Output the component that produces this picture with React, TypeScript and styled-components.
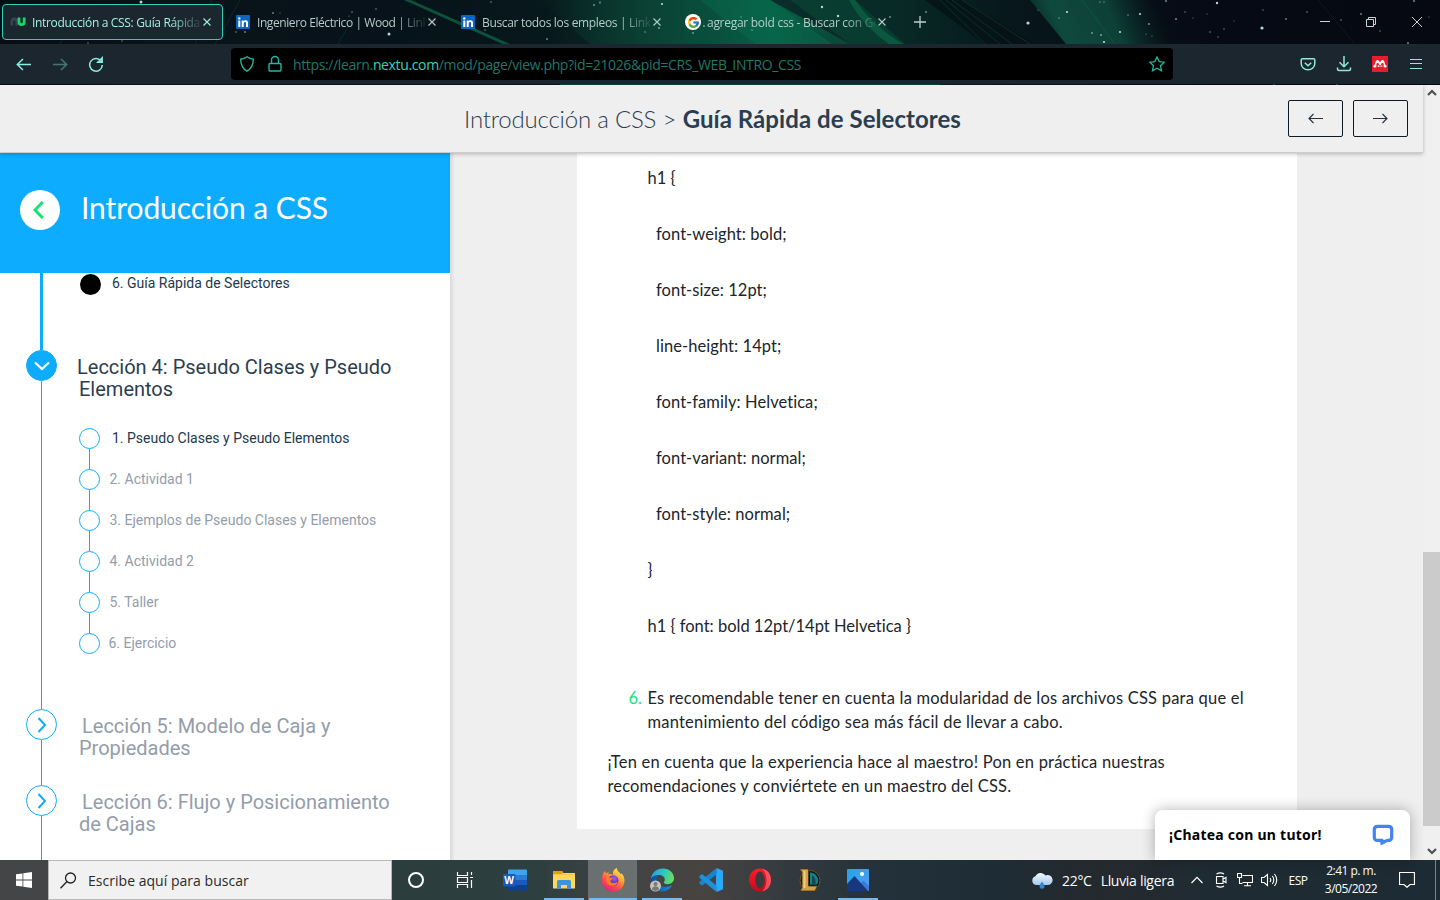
import React from 'react';
import styled, { createGlobalStyle, css } from 'styled-components';
import { FcGoogle } from 'react-icons/fc';

const ui = `"Open Sans", "Noto Sans", sans-serif`;
const blue = '#0eacff';

const Global = createGlobalStyle`
  * { box-sizing: border-box; }
  body { margin: 0; overflow: hidden; background: #efefef; }
  p, h1, h2, ol, ul { margin: 0; padding: 0; font-weight: 400; }
  svg { display: block; flex: none; }
  button { padding: 0; margin: 0; border: 0; background: none; font: inherit; color: inherit; }
`;

const Screen = styled.div`
  width: 1440px;
  height: 900px;
  display: flex;
  flex-direction: column;
  overflow: hidden;
  font-family: ${ui};
`;

/* ---------- browser chrome ---------- */

const Chrome = styled.header`
  position: relative;
  height: 85px;
  flex: none;
  background: #060a13;
`;

const Backdrop = styled.svg`
  position: absolute;
  inset: 0;
`;

const TabStrip = styled.div`
  position: relative;
  height: 44px;
  display: flex;
  align-items: center;
  padding-left: 2px;
`;

const Tab = styled.div<{ $active?: boolean }>`
  width: 221px;
  height: 36px;
  margin-right: 4px;
  padding-left: 7px;
  display: flex;
  align-items: center;
  border: 1px solid ${p => (p.$active ? '#35d0ba' : 'transparent')};
  border-radius: 4px;
  background: ${p => (p.$active ? '#1c262e' : 'transparent')};
  color: ${p => (p.$active ? '#a0f0e4' : '#b4cdc8')};
`;

const Favicon = styled.span`
  width: 16px;
  height: 16px;
  margin-right: 6px;
  display: flex;
  align-items: center;
  justify-content: center;
`;

const GoogleDisc = styled.span`
  width: 16px;
  height: 16px;
  flex: none;
  border-radius: 50%;
  background: #fff;
  display: flex;
  align-items: center;
  justify-content: center;
`;

const TabLabel = styled.span<{ $track: number }>`
  width: 168px;
  padding-top: 2px;
  overflow: hidden;
  white-space: nowrap;
  font-size: 12px;
  line-height: 18px;
  letter-spacing: ${p => p.$track}px;
  mask-image: linear-gradient(to right, #000 138px, transparent 172px);
`;

const TabClose = styled.span`
  width: 14px;
  display: flex;
  justify-content: center;
`;

const WindowControls = styled.div`
  margin-left: auto;
  display: flex;
  color: #c4d6d4;
`;

const WindowButton = styled.button`
  width: 46px;
  height: 44px;
  display: flex;
  align-items: center;
  justify-content: center;
`;

const NewTab = styled.button`
  width: 36px;
  display: flex;
  justify-content: center;
  color: #b9d2cd;
`;

const Toolbar = styled.div`
  position: relative;
  height: 40px;
  display: flex;
  align-items: center;
  padding: 0 6px;
  background: #1c262e;
  color: #8eeadc;
`;

const ToolButton = styled.button<{ $dim?: boolean }>`
  width: 36px;
  height: 32px;
  display: flex;
  align-items: center;
  justify-content: center;
  opacity: ${p => (p.$dim ? 0.4 : 1)};
`;

const UrlBar = styled.div`
  width: 942px;
  height: 32px;
  margin: 0 117px;
  padding: 0 8px;
  display: flex;
  align-items: center;
  border-radius: 4px;
  background: #000;
  color: #26b59f;
`;

const LockSlot = styled.span`
  margin-left: 12px;
`;

const UrlText = styled.span`
  margin: 1px auto 0 10px;
  font-size: 14px;
  letter-spacing: -0.36px;
  white-space: nowrap;
  color: #20776b;
  b { font-weight: 400; color: #35d3bb; }
`;

/* ---------- page ---------- */

const Viewport = styled.div`
  position: relative;
  flex: 1;
  min-height: 0;
  display: flex;
`;

const Page = styled.div`
  width: 1423px;
  display: flex;
  flex-direction: column;
  background: #efefef;
`;

const PageHeader = styled.div`
  position: relative;
  z-index: 1;
  height: 68px;
  flex: none;
  display: grid;
  grid-template-columns: 1fr auto 1fr;
  align-items: center;
  padding: 0 15px;
  background: #efefef;
  box-shadow: inset 0 -1px 0 #cdcdcd, 0 1px 4px rgba(0, 0, 0, 0.25);
`;

const Crumb = styled.h1`
  grid-column: 2;
  font: 300 24px/36px Lato, sans-serif;
  color: #2b3e50;
  white-space: nowrap;
  margin-top: -1px;
  padding-left: 2px;
  letter-spacing: -0.2px;
  b { font-weight: 700; letter-spacing: 0.06px; }
`;

const PagerGroup = styled.div`
  justify-self: end;
  display: flex;
  gap: 10px;
`;

const PagerButton = styled.button`
  width: 55px;
  height: 37px;
  display: flex;
  align-items: center;
  justify-content: center;
  margin-top: -1px;
  border: 1px solid #0f1a24;
  border-radius: 2px;
`;

const Columns = styled.div`
  flex: 1;
  min-height: 0;
  display: flex;
`;

const Sidebar = styled.aside`
  width: 450px;
  flex: none;
  display: flex;
  flex-direction: column;
  overflow: hidden;
  background: #fff;
`;

const SidebarShade = styled.div`
  width: 5px;
  background: linear-gradient(to right, #d8dadd, #efefef);
`;

const CourseHeader = styled.div`
  height: 120px;
  flex: none;
  display: flex;
  align-items: center;
  padding: 0 20px 6px;
  background: ${blue};
`;

const BackCircle = styled.button`
  width: 40px;
  height: 40px;
  flex: none;
  border-radius: 50%;
  background: #fff;
  display: flex;
  align-items: center;
  justify-content: center;
  padding-right: 2px;
`;

const CourseTitle = styled.h2`
  margin: -6px 0 0 19px;
  font: 400 30px/40px Lato, sans-serif;
  letter-spacing: -0.08px;
  padding-left: 2px;
  color: #fff;
`;

const Lesson = styled.section<{ $h: number }>`
  height: ${p => p.$h}px;
  flex: none;
  display: flex;
  padding-left: 26px;
  font-family: Roboto, sans-serif;
`;

const Rail = styled.div`
  width: 31px;
  flex: none;
  display: flex;
  flex-direction: column;
  align-items: center;
`;

const RailLine = styled.div<{ $w: number }>`
  width: ${p => p.$w}px;
  flex: 1;
  background: ${blue};
`;

const RailNode = styled.div<{ $filled?: boolean }>`
  width: 31px;
  height: 31px;
  display: flex;
  align-items: center;
  justify-content: center;
  border: 1px solid ${blue};
  border-radius: 50%;
  background: ${p => (p.$filled ? blue : '#fff')};
  color: ${p => (p.$filled ? '#fff' : blue)};
`;

const LessonBody = styled.div`
  padding-left: 22px;
`;

const LessonTitle = styled.h2<{ $open?: boolean }>`
  margin-top: 6px;
  font-size: 20px;
  line-height: 22px;
  white-space: pre;
  text-indent: ${p => (p.$open ? -2 : 3)}px;
  color: ${p => (p.$open ? '#2b3e50' : '#939dab')};
`;

const Topics = styled.ul`
  margin-top: 28px;
  list-style: none;
`;

const Topic = styled.li<{ $current?: boolean; $done?: boolean }>`
  display: flex;
  padding: ${p => (p.$done ? '1px 0 0 1px' : '0')};
  font-size: 14px;
  line-height: 20px;
  white-space: nowrap;
  color: ${p => (p.$current ? '#24384c' : '#939dab')};
`;

const TopicRail = styled.div`
  width: 21px;
  display: flex;
  flex-direction: column;
  align-items: center;
`;

const TopicDot = styled.span<{ $done?: boolean }>`
  width: 21px;
  height: 21px;
  flex: none;
  border-radius: 50%;
  ${p => (p.$done ? css`background: #000;` : css`border: 1px solid ${blue};`)}
`;

const TopicLink = styled.span`
  width: 1px;
  height: 20px;
  background: ${blue};
`;

const TopicText = styled.span<{ $gap: number; $lift?: number }>`
  margin: -${p => p.$lift ?? 0}px 0 0 ${p => p.$gap}px;
`;

const Content = styled.main`
  flex: 1;
  padding-left: 122px;
  overflow: hidden;
`;

const Article = styled.article`
  width: 720px;
  height: 676px;
  padding: 12.5px 30px 0 30.5px;
  background: #fff;
  font: 400 16.5px/24px Lato, sans-serif;
  font-variant-ligatures: none;
  color: #212529;
`;

const CodeLine = styled.p<{ $indent?: boolean }>`
  margin: 0 0 32px ${p => (p.$indent ? 48.5 : 40)}px;
  letter-spacing: ${p => (p.$indent ? 0.06 : 0)}px;
`;

const Tip = styled.div`
  margin-top: 48px;
  display: grid;
  grid-template-columns: 40px 1fr;
`;

const TipNumber = styled.span`
  padding-left: 21px;
  color: #10e67c;
`;

const Closing = styled.div`
  margin-top: 16px;
`;

const TextLine = styled.p<{ $track: number }>`
  letter-spacing: ${p => p.$track}px;
  white-space: nowrap;
`;

const Scrollbar = styled.div`
  width: 17px;
  display: flex;
  flex-direction: column;
  align-items: center;
  background: #f0f0f0;
  padding: 4px 0 5px;
`;

const ScrollThumb = styled.div`
  width: 17px;
  height: 274px;
  margin: auto 0 22px;
  background: #cbcbcb;
`;

const ChatTab = styled.div`
  position: absolute;
  right: 30px;
  bottom: 0;
  z-index: 2;
  width: 255px;
  height: 50px;
  padding: 0 16px 0 14px;
  display: flex;
  align-items: center;
  justify-content: space-between;
  border-radius: 8px 8px 0 0;
  background: #fff;
  box-shadow: 0 0 14px rgba(0, 0, 0, 0.3);
  font: 700 14px/20px "Noto Sans", sans-serif;
  letter-spacing: 0.24px;
  color: #000;
`;

/* ---------- taskbar ---------- */

const Taskbar = styled.footer`
  height: 40px;
  flex: none;
  display: flex;
  background: linear-gradient(to right, #434547 0, #434547 48px, #2c3d3d 392px, #2e3f3f 540px, #434443 640px, #474341 710px, #323a3f 790px, #23313a 880px, #1e2c35 1000px, #25292c 1100px, #1f2b33 1200px, #1d2b34 100%);
  color: #fff;
`;

const TaskButton = styled.button<{ $w?: number; $line?: number; $active?: boolean }>`
  position: relative;
  width: ${p => p.$w ?? 49}px;
  height: 40px;
  display: flex;
  align-items: center;
  justify-content: center;
  background: ${p => (p.$active ? '#69706f' : 'transparent')};
  ${p =>
    p.$line &&
    css`
      &::after {
        content: '';
        position: absolute;
        bottom: 0;
        left: ${((p.$w ?? 49) - p.$line) / 2}px;
        width: ${p.$line}px;
        height: 2px;
        background: #76b9ed;
      }
    `}
`;

const SearchBox = styled.div`
  width: 344px;
  height: 40px;
  display: flex;
  align-items: center;
  padding-left: 11px;
  gap: 11px;
  border: 1px solid #b8b8b8;
  background: #f1f1f1;
  color: #2b2b2b;
  font-size: 14px;
  letter-spacing: 0.03px;
`;

const Tray = styled.div`
  margin-left: auto;
  display: flex;
  align-items: center;
`;

const Weather = styled.div`
  width: 154px;
  display: flex;
  align-items: center;
  gap: 9px;
  padding-top: 1px;
  font-size: 14px;
  letter-spacing: -0.3px;
  white-space: pre;
`;

const TrayCell = styled.div<{ $w: number }>`
  width: ${p => p.$w}px;
  display: flex;
  justify-content: center;
  font-size: 12px;
  letter-spacing: -0.5px;
`;

const Clock = styled.div`
  width: 74px;
  padding-right: 2px;
  text-align: center;
  font-size: 12px;
  line-height: 18px;
  letter-spacing: -0.5px;
`;

const DesktopEdge = styled.div`
  width: 5px;
  height: 40px;
  margin-left: 10px;
  border-left: 1px solid #7b858b;
`;

/* ---------- icons ---------- */

const Line: React.FC<{ w: number; h: number; d: string; sw?: number; color?: string }> = ({ w, h, d, sw = 1, color }) => (
  <svg width={w} height={h} viewBox={`0 0 ${w} ${h}`} fill="none" stroke={color ?? 'currentColor'} strokeWidth={sw}>
    <path d={d} />
  </svg>
);

const NuIcon = () => (
  <svg width="16" height="16" fill="none" strokeWidth="2.800">
    <path d="M1.800 11.500V7.500a2.500 2.500 0 0 1 5 0V11.500" stroke="#39424f" />
    <path d="M9 3.500v4.500a2.600 2.600 0 0 0 5.200 0V3.500" stroke="#12d96a" />
  </svg>
);

const LinkedInIcon = () => (
  <svg width="14" height="14">
    <rect width="14" height="14" rx="1" fill="#0a66c2" />
    <circle cx="3.300" cy="3.400" r="1.200" fill="#fff" />
    <path d="M2.300 5.500h2V12h-2zM5.700 5.500h1.900v.9c.5-.8 1.200-1.100 2-1.100 1.800 0 2.400 1.200 2.400 3V12h-2V8.700c0-.9-.2-1.600-1-1.600-.9 0-1.300.7-1.300 1.600V12h-2z" fill="#fff" />
  </svg>
);

const MendeleyIcon = () => (
  <svg width="16" height="16">
    <rect width="16" height="16" fill="#e81c2e" />
    <path d="M3.200 10.300C4 8.500 3.400 5.800 5.200 5.300S7.300 7.500 8 8.200C8.700 7.500 9 4.800 10.800 5.300S12 8.500 12.800 10.300" fill="none" stroke="#fff" strokeWidth="1.500" />
    <g fill="#fff">
      <circle cx="2.900" cy="10.200" r="1.400" />
      <circle cx="13.100" cy="10.200" r="1.400" />
      <circle cx="8" cy="7.600" r="1.300" />
      <circle cx="5.600" cy="5.400" r="1.500" />
      <circle cx="10.400" cy="5.400" r="1.500" />
      <circle cx="6.600" cy="10.200" r=".9" />
      <circle cx="9.400" cy="10.200" r=".9" />
    </g>
  </svg>
);

const stars = [
  [141, 2, 1.5], [118, 32, 0.7], [236, 32, 0.8], [273, 13, 0.9], [280, 13, 0.6], [352, 12, 0.8], [376, 9, 0.8], [349, 16, 0.6], [389, 34, 1.5], [245, 32, 0.9],
  [300, 30, 0.7], [485, 30, 0.8], [491, 2, 0.8], [547, 39, 0.9], [594, 5, 0.9], [600, 3, 0.7], [662, 4, 1.1], [645, 32, 0.8], [659, 28, 1], [693, 33, 0.9],
  [704, 26, 0.9], [752, 30, 0.8], [741, 17, 0.7], [822, 7, 1.2], [838, 16, 1.2], [890, 17, 0.9], [926, 12, 0.9], [1028, 23, 1.6], [1038, 10, 0.6], [1067, 12, 1.1],
  [1059, 18, 0.8], [1140, 14, 1.1], [1128, 15, 0.8], [1092, 33, 0.9], [1101, 35, 1], [1104, 42, 1.1], [1120, 32, 1.1], [1149, 24, 1], [1146, 34, 0.6], [1152, 36, 0.6],
  [1166, 1, 1], [1176, 19, 1], [1185, 12, 0.7], [1193, 18, 0.6], [1217, 3, 1.2], [1207, 14, 0.6], [1210, 32, 0.8], [1218, 37, 0.7], [1224, 29, 0.7], [1262, 28, 1.6],
  [1263, 10, 0.7], [1286, 19, 0.9], [1307, 12, 0.8], [1341, 20, 0.8], [1361, 14, 0.9], [1380, 31, 0.7], [1414, 1, 1], [1408, 43, 1], [1429, 17, 0.6], [1234, 21, 0.5],
  [100, 9, 0.5], [88, 43, 0.7], [122, 41, 0.7], [1100, 2, 0.7], [1104, 2, 0.7], [600, 2, 0.7], [1274, 84, 0.8], [1337, 84, 0.8],
];

const Sky = () => (
  <Backdrop width="1440" height="85" aria-hidden>
    <defs>
      <linearGradient id="sky" x1="0" x2="1">
        <stop offset="0" stopColor="#070d14" />
        <stop offset=".12" stopColor="#08131a" />
        <stop offset=".26" stopColor="#07121a" />
        <stop offset=".38" stopColor="#07181c" />
        <stop offset=".46" stopColor="#0a3029" />
        <stop offset=".62" stopColor="#082a27" />
        <stop offset=".7" stopColor="#07171c" />
        <stop offset=".84" stopColor="#060a14" />
        <stop offset="1" stopColor="#060912" />
      </linearGradient>
      <linearGradient id="band" x1="0" x2="1">
        <stop offset="0" stopColor="#0a4a38" stopOpacity="0" />
        <stop offset=".4" stopColor="#0a4a3a" stopOpacity=".8" />
        <stop offset=".75" stopColor="#075f45" />
        <stop offset="1" stopColor="#0a4c38" stopOpacity=".8" />
      </linearGradient>
      <linearGradient id="beam" gradientUnits="userSpaceOnUse" x1="1030" y1="40" x2="1150" y2="-10">
        <stop offset="0" stopColor="#0e4a3d" stopOpacity=".2" />
        <stop offset=".25" stopColor="#0f493d" />
        <stop offset=".65" stopColor="#0d4037" />
        <stop offset="1" stopColor="#0b2a2a" stopOpacity="0" />
      </linearGradient>
    </defs>
    <rect width="1440" height="85" fill="url(#sky)" />
    <path d="M540 0H770L850 44H590z" fill="url(#band)" />
    <path d="M700 0H770L832 44H755z" fill="#087350" opacity=".35" />
    <path d="M790 0L850 44H905L855 0z" fill="#0a4535" opacity=".7" />
    <path d="M855 0q18 26 48 44h-14q-26-18-40-44z" fill="#0b6b49" opacity=".6" />
    <path d="M925 0L985 44H1035L962 0z" fill="#061217" opacity=".8" />
    <path d="M1030 0H1150L1200 44H1066z" fill="url(#beam)" />
    <g fill="none" stroke="#0d6a49">
      <path d="M405 -1L511 46" stroke="#0d503b" strokeWidth="3" />
      <path d="M770 0L830 44M740 0L808 44M718 0L790 44" opacity=".5" />
      <path d="M1082 0L1115 44" stroke="#0c6137" opacity=".7" />
      <path d="M940 0L985 44M946 0L1000 44M952 0L1012 44M962 0L1030 44" opacity=".35" />
      <path d="M240 0L215 44M195 44L212 0M352 20L338 44M60 44L80 10" opacity=".3" />
      <path d="M1318 0L1355 44" opacity=".2" />
    </g>
    <path d="M560 84.500H940" stroke="#0c4636" />
    <g fill="#b9e6dc">
      {stars.map(([x, y, r], i) => (
        <circle key={i} cx={x} cy={y} r={r} opacity={r > 1 ? 0.95 : 0.6} />
      ))}
    </g>
  </Backdrop>
);

const WordIcon = () => (
  <svg width="24" height="24">
    <path d="M6 1.500h17a1 1 0 0 1 1 1V7H5V2.500a1 1 0 0 1 1-1z" fill="#41a5ee" />
    <path d="M5 7h19v5H5z" fill="#2b7cd3" />
    <path d="M5 12h19v5H5z" fill="#185abd" />
    <path d="M5 17h19v4.500a1 1 0 0 1-1 1H6a1 1 0 0 1-1-1z" fill="#103f91" />
    <rect y="6" width="12.500" height="12.500" rx="1" fill="#185abd" />
    <text x="6.200" y="16" fontSize="10" fontWeight="700" fontFamily="Open Sans, sans-serif" textAnchor="middle" fill="#fff">W</text>
  </svg>
);

const FolderIcon = () => (
  <svg width="22" height="20">
    <path d="M0 1h9l1.500 2H22v15.500H0z" fill="#ffd75e" />
    <path d="M0 1h9l1.200 1.600L9 4H0z" fill="#e59f10" />
    <path d="M0 4h22v1H0z" fill="#f7c64a" />
    <path d="M4 19v-7.500a1.500 1.500 0 0 1 1.500-1.500h11a1.500 1.500 0 0 1 1.500 1.500V19h-4v-4H8v4z" fill="#3d94d6" />
  </svg>
);

const FirefoxIcon = () => (
  <svg width="24" height="24" viewBox="0 0 24 24">
    <defs>
      <linearGradient id="fox" x1=".8" y1="0" x2=".2" y2="1">
        <stop offset="0" stopColor="#fff44f" />
        <stop offset=".35" stopColor="#ffa436" />
        <stop offset=".65" stopColor="#ff4f4b" />
        <stop offset="1" stopColor="#e31587" />
      </linearGradient>
      <radialGradient id="globe" cx=".6" cy=".3">
        <stop offset="0" stopColor="#a05cf5" />
        <stop offset="1" stopColor="#5b33b8" />
      </radialGradient>
    </defs>
    <path d="M2 6c.3-1.500 1.200-2.500 2-3 0 1 .4 1.800 1 2.300C6 4.500 7 4.200 8 4.200c0 0-.8.800-.8 2 3-.6 4 .2 5 .8C11.500 3.500 13 1 16 0c-.3 3 2.500 4 4 6.300.3-.3.4-.8.3-1.300C22.500 7 23.500 10 23.500 12.500 23.500 19 18.500 23.500 12.300 23.500 5.800 23.500.8 18.700.8 12.500.8 10 1.300 8 2 6z" fill="url(#fox)" />
    <circle cx="12.300" cy="12.500" r="5.200" fill="url(#globe)" />
    <path d="M4.500 8c2 .2 3 .9 4 1.700 1.200 0 2.500-.2 3.500.2-.5 1.300-2 1.500-2.500 2.300-.5 2 1.500 3.200 3.200 3 1.800-.2 2.600-1.200 4-.9-1 2.500-3 3.500-5 3.400C7 18 4 14 4.500 8z" fill="#ff7a2f" />
  </svg>
);

const EdgeIcon = () => (
  <svg width="26" height="24" viewBox="0 0 26 24">
    <defs>
      <linearGradient id="edgeTop" x1="0" x2="1" y1=".3" y2=".5">
        <stop offset="0" stopColor="#1fa2e0" />
        <stop offset=".5" stopColor="#2fc3c8" />
        <stop offset="1" stopColor="#66e256" />
      </linearGradient>
      <linearGradient id="edgeLow" x1="0" x2="1">
        <stop offset="0" stopColor="#0d4ea0" />
        <stop offset="1" stopColor="#1590dc" />
      </linearGradient>
    </defs>
    <path d="M2 11C2.500 4.500 8 .5 14 .5 20.500.5 25 5 25 10c0 4-3 6.200-6.500 6.200-2.500 0-4-.9-3.600-1.900.6-1 .9-1.700.9-2.800C15.800 8.700 13 7 10 7 6 7 3 9 2 11z" fill="url(#edgeTop)" />
    <path d="M2 11c1-2.500 4.500-4.200 7.500-3.700-2 1.300-2.700 4-1.500 7 1.700 4.200 8 6.200 14.500 3.200.5-.1.600.2.300.6C20.500 21.500 17.500 23.500 13.500 23.500 7 23.500 1.500 18 2 11z" fill="url(#edgeLow)" />
    <circle cx="6.500" cy="18" r="5.500" fill="#c5c3c2" />
    <circle cx="6.500" cy="16" r="2" fill="#7a7775" />
    <path d="M3 21.500c0-4.200 7-4.200 7 0a5.400 5.400 0 0 1-7 0z" fill="#7a7775" />
  </svg>
);

const CodeIcon = () => (
  <svg width="24" height="24">
    <path d="M17.500 0L24 2.800v18.400L17.500 24l-.5-6V6z" fill="#2ba9f5" />
    <path d="M17.500 0v6.500L3 17.800 .3 15.600V14z" fill="#1685cf" />
    <path d="M.3 9.800V8.300L3 6.100l14.500 11.300V24z" fill="#1a92dc" />
  </svg>
);

const OperaIcon = () => (
  <svg width="22" height="24">
    <defs>
      <linearGradient id="op" x1="0" y1="0" x2="0" y2="1">
        <stop offset="0" stopColor="#ff1b2d" />
        <stop offset="1" stopColor="#c40a1c" />
      </linearGradient>
    </defs>
    <ellipse cx="11" cy="12" rx="11" ry="11.500" fill="url(#op)" />
    <path d="M13 .7C18.500 1.300 22 6 22 12s-3.500 10.700-9 11.300c2.500-1.500 4.500-6 4.500-11.300S15.500 2.200 13 .7z" fill="#ff6f79" opacity=".65" />
    <ellipse cx="11" cy="12" rx="4.700" ry="8.500" fill="#3b3a3d" />
  </svg>
);

const LeagueIcon = () => (
  <svg width="24" height="24">
    <circle cx="13" cy="12.500" r="10" fill="#0c1418" stroke="#6d5527" strokeWidth="1" />
    <path d="M13 4.500a8 8 0 0 1 7 12h-7z" fill="#16808a" />
    <path d="M15 7c3 2 4 5 3.500 9H15z" fill="#0d4a57" />
    <path d="M2.500 1h9v17h9l-2.500 5H3l2-3V4z" fill="#d0a147" stroke="#4a3410" strokeWidth=".8" />
    <path d="M6.500 2.500h2V20h-2z" fill="#f0cf7c" />
  </svg>
);

const PhotosIcon = () => (
  <svg width="22" height="22">
    <defs>
      <linearGradient id="ph" x1="0" y1="0" x2="1" y2="1">
        <stop offset="0" stopColor="#1fa5ee" />
        <stop offset="1" stopColor="#5a9bf0" />
      </linearGradient>
    </defs>
    <rect width="22" height="22" rx=".8" fill="url(#ph)" />
    <path d="M11 17l5.500-5.500L22 17v5H11z" fill="#3f78d6" />
    <path d="M0 15L7.500 7 21 22H0z" fill="#16387c" />
    <circle cx="15" cy="5" r="2.100" fill="#fff" />
  </svg>
);

const CloudIcon = () => (
  <svg width="22" height="17">
    <defs>
      <linearGradient id="cl" x1="0" y1="0" x2="0" y2="1">
        <stop offset="0" stopColor="#f3f8fd" />
        <stop offset="1" stopColor="#a5c9ef" />
      </linearGradient>
    </defs>
    <path d="M5 13a4.500 4.500 0 0 1-.6-8.700A6 6 0 0 1 14.500 3.500 5 5 0 1 1 16 13z" fill="url(#cl)" />
    <path d="M11 9.500c1.500 2.200 2.500 3.300 2.500 4.700a2.500 2.500 0 0 1-5 0c0-1.400 1-2.500 2.500-4.700z" fill="#2f86d8" />
  </svg>
);

const ChatIcon = () => (
  <svg width="22" height="22">
    <path d="M5.500 2.400h11c2 0 3.200 1.200 3.200 3.200v7.600c0 2-1.200 3.200-3.200 3.200h-1.200l-5.100 2.300v-2.300H5.500c-2 0-3.200-1.200-3.200-3.200V5.600c0-2 1.200-3.200 3.200-3.200z" fill="none" stroke="#4384f5" strokeWidth="3.200" strokeLinejoin="round" />
    <path d="M8.500 16.500h8l-4 3-4 2z" fill="#4384f5" />
  </svg>
);

/* ---------- data ---------- */

const tabs = [
  { label: 'Introducción a CSS: Guía Rápida de Selectores', icon: <NuIcon />, track: -0.33, active: true },
  { label: 'Ingeniero Eléctrico | Wood | LinkedIn', icon: <LinkedInIcon />, track: -0.42 },
  { label: 'Buscar todos los empleos | LinkedIn', icon: <LinkedInIcon />, track: -0.33 },
  { label: 'agregar bold css - Buscar con Google', icon: <GoogleDisc><FcGoogle size={13} /></GoogleDisc>, track: -0.28 },
];

const topics = [
  '1. Pseudo Clases y Pseudo Elementos',
  '2. Actividad 1',
  '3. Ejemplos de Pseudo Clases y Elementos',
  '4. Actividad 2',
  '5. Taller',
  '6. Ejercicio',
];

const code: [string, boolean][] = [
  ['h1 {', false],
  ['font-weight: bold;', true],
  ['font-size: 12pt;', true],
  ['line-height: 14pt;', true],
  ['font-family: Helvetica;', true],
  ['font-variant: normal;', true],
  ['font-style: normal;', true],
  ['}', false],
  ['h1 { font: bold 12pt/14pt Helvetica }', false],
];

const closedLessons = [
  'Lección 5: Modelo de Caja y\nPropiedades',
  'Lección 6: Flujo y Posicionamiento\nde Cajas',
];

export default function App() {
  return (
    <Screen>
      <Global />
      <Chrome>
        <Sky />
        <TabStrip>
          {tabs.map(t => (
            <Tab key={t.label} $active={t.active}>
              <Favicon>{t.icon}</Favicon>
              <TabLabel $track={t.track}>{t.label}</TabLabel>
              <TabClose><Line w={8} h={8} d="M.5.5l7 7M7.500.5l-7 7" sw={1.100} /></TabClose>
            </Tab>
          ))}
          <NewTab><Line w={12} h={12} d="M6 0v12M0 6h12" sw={1.300} /></NewTab>
          <WindowControls>
            <WindowButton><Line w={10} h={10} d="M0 4.500h10" /></WindowButton>
            <WindowButton><Line w={10} h={10} d="M.5 2.500h7v7h-7zM2.500 2.500v-2h7v7h-2" /></WindowButton>
            <WindowButton><Line w={10} h={10} d="M0 0l10 10M10 0L0 10" /></WindowButton>
          </WindowControls>
        </TabStrip>
        <Toolbar>
          <ToolButton><Line w={16} h={14} d="M15 7.500H1.500M7 2L1.300 7.500 7 13" sw={1.500} /></ToolButton>
          <ToolButton $dim><Line w={16} h={14} d="M1 7.500h13.500M9 2l5.700 5.500L9 13" sw={1.500} /></ToolButton>
          <ToolButton>
            <Line w={16} h={16} d="M13.300 5.400A6.300 6.300 0 1 0 14.300 9M14.200 1.800v4.400H9.800z" sw={1.500} />
          </ToolButton>
          <UrlBar>
            <Line w={16} h={18} d="M8 1.800c2 1.500 4 2.200 6.300 2.400 0 5.500-1.500 9-6.300 12-4.800-3-6.300-6.500-6.300-12C4 4 6 3.300 8 1.800z" sw={1.400} />
            <LockSlot>
              <Line w={16} h={18} d="M3 8.500h10a1 1 0 0 1 1 1V15a1 1 0 0 1-1 1H3a1 1 0 0 1-1-1V9.500a1 1 0 0 1 1-1zM4.500 8.300V5a3.500 3.500 0 0 1 7 0v3.300" sw={1.400} />
            </LockSlot>
            <UrlText>https://learn.<b>nextu.com</b>/mod/page/view.php?id=21026&amp;pid=CRS_WEB_INTRO_CSS</UrlText>
            <Line w={16} h={16} d="M8 1l2.200 4.600 5 .6-3.700 3.500 1 5L8 12.200 3.500 14.700l1-5L.8 6.200l5-.6z" sw={1.300} />
          </UrlBar>
          <ToolButton>
            <Line w={16} h={16} d="M2.500 2.700h11a1.300 1.300 0 0 1 1.300 1.300V7.500a6.800 6.300 0 0 1-13.600 0V4a1.300 1.300 0 0 1 1.300-1.300zM4.800 6.700L8 9.800l3.200-3.100" sw={1.500} />
          </ToolButton>
          <ToolButton>
            <Line w={16} h={16} d="M8 0v10.500M3.500 6.300L8 10.700l4.500-4.400M1.500 11.500v1.500a1.500 1.500 0 0 0 1.500 1.500h10a1.500 1.500 0 0 0 1.500-1.500v-1.500" sw={1.500} />
          </ToolButton>
          <ToolButton><MendeleyIcon /></ToolButton>
          <ToolButton><Line w={12} h={12} d="M0 1.500h12M0 5.500h12M0 10.500h12" sw={1.200} /></ToolButton>
        </Toolbar>
      </Chrome>

      <Viewport>
        <Page>
          <PageHeader>
            <Crumb>Introducción a CSS &gt; <b>Guía Rápida de Selectores</b></Crumb>
            <PagerGroup>
              <PagerButton><Line w={15} h={11} d="M15 5.500H1M5.500 1L1 5.500 5.500 10" sw={1.100} color="#24303a" /></PagerButton>
              <PagerButton><Line w={15} h={11} d="M0 5.500h14M9.500 1L14 5.500 9.500 10" sw={1.100} color="#24303a" /></PagerButton>
            </PagerGroup>
          </PageHeader>
          <Columns>
            <Sidebar>
              <CourseHeader>
                <BackCircle><Line w={12} h={18} d="M9.800 1L2 9l7.800 8" sw={3} color="#14e272" /></BackCircle>
                <CourseTitle>Introducción a CSS</CourseTitle>
              </CourseHeader>
              <Lesson $h={77}>
                <Rail><RailLine $w={3} /></Rail>
                <LessonBody>
                  <Topic as="div" $current $done>
                    <TopicDot $done />
                    <TopicText $gap={11} $lift={1}>6. Guía Rápida de Selectores</TopicText>
                  </Topic>
                </LessonBody>
              </Lesson>
              <Lesson $h={359}>
                <Rail>
                  <RailNode $filled><Line w={16} h={10} d="M1 1.500l7 6.500 7-6.500" sw={2.200} /></RailNode>
                  <RailLine $w={1} />
                </Rail>
                <LessonBody>
                  <LessonTitle $open>{'Lección 4: Pseudo Clases y Pseudo\nElementos'}</LessonTitle>
                  <Topics>
                    {topics.map((t, i) => (
                      <Topic key={t} $current={i === 0}>
                        <TopicRail>
                          <TopicDot />
                          {i < topics.length - 1 && <TopicLink />}
                        </TopicRail>
                        <TopicText $gap={i === 0 ? 12 : i === 5 ? 8.5 : 9.5}>{t}</TopicText>
                      </Topic>
                    ))}
                  </Topics>
                </LessonBody>
              </Lesson>
              {closedLessons.map(t => (
                <Lesson key={t} $h={76}>
                  <Rail>
                    <RailNode><Line w={10} h={16} d="M1.500 1l6.500 7-6.500 7" sw={2} /></RailNode>
                    <RailLine $w={1} />
                  </Rail>
                  <LessonBody><LessonTitle>{t}</LessonTitle></LessonBody>
                </Lesson>
              ))}
            </Sidebar>
            <SidebarShade />
            <Content>
              <Article>
                {code.map(([t, indent]) => <CodeLine key={t} $indent={indent}>{t}</CodeLine>)}
                <Tip>
                  <TipNumber>6.</TipNumber>
                  <div>
                    <TextLine $track={0.22}>Es recomendable tener en cuenta la modularidad de los archivos CSS para que el</TextLine>
                    <TextLine $track={0.22}>mantenimiento del código sea más fácil de llevar a cabo.</TextLine>
                  </div>
                </Tip>
                <Closing>
                  <TextLine $track={0.21}>¡Ten en cuenta que la experiencia hace al maestro! Pon en práctica nuestras</TextLine>
                  <TextLine $track={0.15}>recomendaciones y conviértete en un maestro del CSS.</TextLine>
                </Closing>
              </Article>
            </Content>
          </Columns>
        </Page>
        <Scrollbar>
          <Line w={10} h={7} d="M1 6l4-4 4 4" sw={2.200} color="#505050" />
          <ScrollThumb />
          <Line w={10} h={7} d="M1 1l4 4 4-4" sw={2.200} color="#505050" />
        </Scrollbar>
        <ChatTab>
          ¡Chatea con un tutor!
          <ChatIcon />
        </ChatTab>
      </Viewport>

      <Taskbar>
        <TaskButton $w={48}>
          <svg width="16" height="16" fill="#fff"><path d="M0 2.300l6.500-.9V7.600H0zM7.300 1.300L16 0v7.600H7.300zM0 8.400h6.500v6.200L0 13.700zM7.300 8.400H16V16l-8.700-1.200z" /></svg>
        </TaskButton>
        <SearchBox>
          <svg width="17" height="17" fill="none" stroke="#222" strokeWidth="1.300"><circle cx="10.500" cy="6" r="5" /><path d="M7 9.500L.5 16.300" /></svg>
          Escribe aquí para buscar
        </SearchBox>
        <TaskButton $w={48}><svg width="18" height="18"><circle cx="9" cy="9" r="7" fill="none" stroke="#fff" strokeWidth="2" /></svg></TaskButton>
        <TaskButton $w={50}><Line w={18} h={16} d="M1.500 0v3.500h10V0M1.500 16v-3.500h10V16M1.500 5.500h10v5h-10zM15.500 0v3M15.500 8v8M14 5.500h3" sw={1.200} /></TaskButton>
        <TaskButton><WordIcon /></TaskButton>
        <TaskButton $line={40}><FolderIcon /></TaskButton>
        <TaskButton $line={48} $active><FirefoxIcon /></TaskButton>
        <TaskButton $line={40}><EdgeIcon /></TaskButton>
        <TaskButton><CodeIcon /></TaskButton>
        <TaskButton><OperaIcon /></TaskButton>
        <TaskButton><LeagueIcon /></TaskButton>
        <TaskButton $line={40}><PhotosIcon /></TaskButton>
        <Tray>
          <Weather><CloudIcon /><span>22°C</span><span>Lluvia ligera</span></Weather>
          <TrayCell $w={24}><Line w={12} h={8} d="M.5 7L6 1.300 11.500 7" sw={1.200} /></TrayCell>
          <TrayCell $w={24}><Line w={12} h={16} d="M1.500 4.500h6.500v7H1.500zM8 7l3-1.500v5L8 9M1.500 2q4-2.300 7.500 0M1.500 14q4 2.300 7.500 0" sw={1.100} /></TrayCell>
          <TrayCell $w={24}><Line w={16} h={14} d="M5.500 2.500h10v7h-10M.5.5h4v4h-4zM2.500 4.500v6h3M10.500 9.500v3M7 12.800h7" sw={1.100} /></TrayCell>
          <TrayCell $w={24}><Line w={17} h={14} d="M.5 4.500h2.500l3.500-3v11L3 9.500H.5zM9 5q1.500 2 0 4M11.300 3q3 4 0 8M13.500 1q4.500 6 0 12" sw={1.100} /></TrayCell>
          <TrayCell $w={34}>ESP</TrayCell>
          <Clock>2:41 p. m.<br />3/05/2022</Clock>
          <TrayCell $w={36}><Line w={16} h={16} d="M.5.500h15v12h-4.500L8 15.300 5 12.500H.5z" sw={1.200} /></TrayCell>
          <DesktopEdge />
        </Tray>
      </Taskbar>
    </Screen>
  );
}
